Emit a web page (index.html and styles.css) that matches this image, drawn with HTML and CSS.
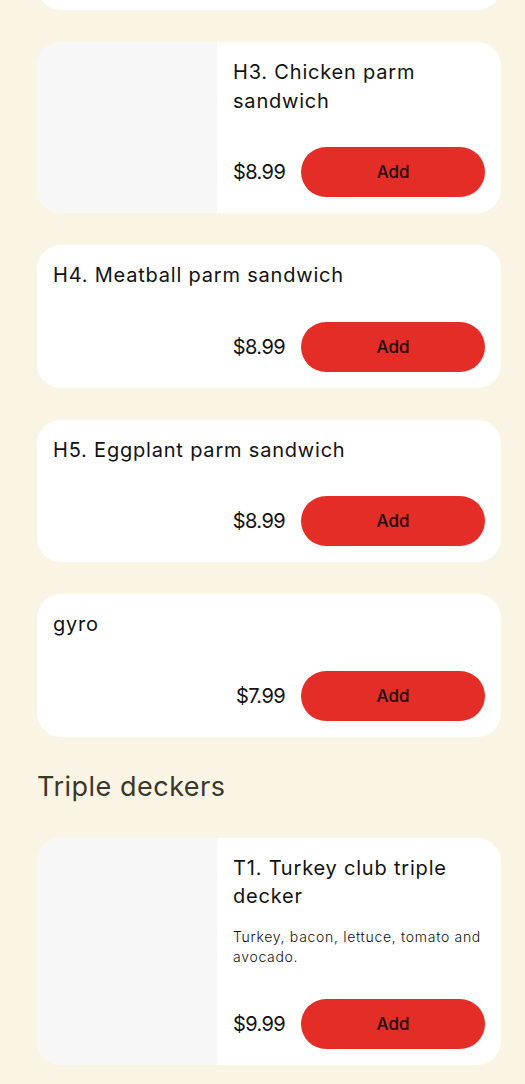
FILE: index.html
```html
<!DOCTYPE html>
<html>
<head>
<meta charset="utf-8">
<link rel="stylesheet" href="styles.css">
</head>
<body>
<main class="menu">
  <div class="card card-prev"></div>

  <div class="card">
    <div class="thumb"></div>
    <div class="info">
      <h3 class="title">H3. Chicken parm sandwich</h3>
      <div class="footer">
        <span class="price">$8.99</span>
        <button class="add">Add</button>
      </div>
    </div>
  </div>

  <div class="card">
    <div class="info">
      <h3 class="title">H4. Meatball parm sandwich</h3>
      <div class="footer">
        <span class="price">$8.99</span>
        <button class="add">Add</button>
      </div>
    </div>
  </div>

  <div class="card">
    <div class="info">
      <h3 class="title">H5. Eggplant parm sandwich</h3>
      <div class="footer">
        <span class="price">$8.99</span>
        <button class="add">Add</button>
      </div>
    </div>
  </div>

  <div class="card">
    <div class="info">
      <h3 class="title">gyro</h3>
      <div class="footer">
        <span class="price">$7.99</span>
        <button class="add">Add</button>
      </div>
    </div>
  </div>

  <h2 class="section">Triple deckers</h2>

  <div class="card">
    <div class="thumb"></div>
    <div class="info">
      <h3 class="title">T1. Turkey club triple decker</h3>
      <p class="desc">Turkey, bacon, lettuce, tomato and avocado.</p>
      <div class="footer">
        <span class="price">$9.99</span>
        <button class="add">Add</button>
      </div>
    </div>
  </div>
</main>
</body>
</html>
```
FILE: styles.css
```css
html, body {
  margin: 0;
  padding: 0;
  background: #faf4e5;
}
body {
  font-family: "Inter", "Noto Sans", sans-serif;
  color: #111;
}
.menu {
  width: 464px;
  margin: 0 0 0 37px;
  display: flex;
  flex-direction: column;
  gap: 32px;
}
.card {
  background: #fff;
  border-radius: 24px;
  display: flex;
  overflow: hidden;
}
.card-prev {
  height: 110px;
  margin-top: -100px;
}
.thumb {
  width: 180px;
  flex: none;
  background: #f7f7f7;
}
.info {
  flex: 1;
  min-width: 0;
  padding: 16px;
  display: flex;
  flex-direction: column;
}
.title {
  margin: 0;
  font-size: 20px;
  font-weight: 400;
  line-height: 28.5px;
  letter-spacing: 0.8px;
}
.desc {
  margin: 16px 0 0;
  font-size: 14px;
  font-weight: 300;
  line-height: 20px;
  letter-spacing: 0.7px;
}
.footer {
  margin-top: 32px;
  display: flex;
  justify-content: flex-end;
  align-items: center;
  gap: 16px;
}
.price {
  flex: none;
  font-size: 20px;
  letter-spacing: -0.6px;
}
.add {
  flex: 0 1 184px;
  min-width: 0;
  height: 50px;
  border: none;
  border-radius: 25px;
  background: #e52d27;
  color: #1a0606;
  font-family: inherit;
  font-size: 17px;
  font-weight: 500;
}
.section {
  margin: 0;
  font-size: 27px;
  font-weight: 400;
  color: #3a372b;
  line-height: 34px;
  padding: 1px 0 2px;
  letter-spacing: 0.5px;
}
```
